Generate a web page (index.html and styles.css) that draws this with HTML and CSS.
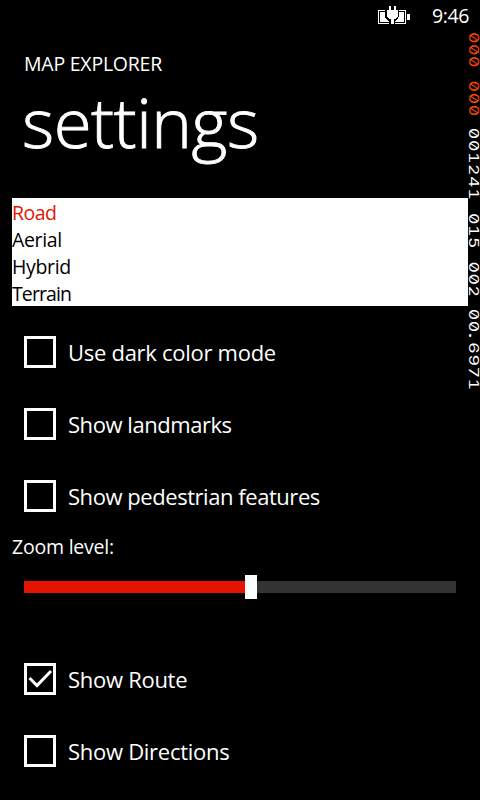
FILE: index.html
```
<!DOCTYPE html>
<html lang="en">
<head>
<meta charset="utf-8">
<title>Map Explorer settings</title>
<link rel="stylesheet" href="styles.css">
</head>
<body>
<div class="phone">
  <header class="status">
    <svg class="battery" width="32" height="20" viewBox="0 0 32 20" shape-rendering="crispEdges">
      <path d="M0 4h28v14H0z" fill="#fff"/>
      <path d="M1 5h26v12H1z" fill="#000"/>
      <path d="M2 6h24v10H2zM29 8h3v6h-3z" fill="#fff"/>
      <path d="M7 4h14v6l-1 3-3 2v3h-6v-3l-3-2-1-3z" fill="#000"/>
      <path d="M11 0h2v4h3V0h2v4h2v6l-2 3h-2v5h-3v-5h-2l-2-3V4h2z" fill="#fff"/>
    </svg>
    <span class="clock">9:46</span>
  </header>
  <div class="app-name"><span>MAP EXPLORER</span></div>
  <h1 class="title"><span>settings</span></h1>
  <main class="content">
    <ul class="modes">
      <li class="selected">Road</li>
      <li>Aerial</li>
      <li>Hybrid</li>
      <li class="tight">Terrain</li>
    </ul>
    <div class="checks">
      <div class="check"><span class="box"></span><span class="label wide">Use dark color mode</span></div>
      <div class="check"><span class="box"></span><span class="label">Show landmarks</span></div>
      <div class="check"><span class="box"></span><span class="label">Show pedestrian features</span></div>
    </div>
    <div class="zoom-label">Zoom level:</div>
    <div class="slider"><span class="fill"></span><span class="thumb"></span><span class="rest"></span></div>
    <div class="checks route">
      <div class="check"><span class="box"><svg width="26" height="26" viewBox="0 0 26 26"><path d="M2.500 12l7.500 7.500L24 5" fill="none" stroke="#fff" stroke-width="3"/></svg></span><span class="label wide">Show Route</span></div>
      <div class="check"><span class="box"></span><span class="label wide">Show Directions</span></div>
    </div>
  </main>
  <aside class="counters">
    <span class="hot">000</span>
    <span class="hot">000</span>
    <span>001241</span>
    <span>015</span>
    <span>002</span>
    <span>00<b class="point">.</b>6971</span>
  </aside>
</div>
</body>
</html>
```
FILE: styles.css
```
* { box-sizing: border-box; }
body { margin: 0; background: #000; color: #fff; font-family: "Open Sans", "Noto Sans", sans-serif; }
.phone { position: relative; width: 480px; height: 800px; overflow: hidden; background: #000; }
.status { height: 32px; display: flex; justify-content: flex-end; padding: 6px 10px 0 0; }
.battery { margin-right: 22px; }
.clock { width: 38px; font-size: 19.5px; line-height: 19px; letter-spacing: -0.35px; white-space: nowrap; }
.app-name { height: 40px; padding: 18px 0 0 24px; font-size: 19.5px; line-height: 28px; letter-spacing: -0.23px; }
.title { margin: 0; height: 126px; padding: 1px 0 0 22px; font-size: 69px; line-height: 96px; font-weight: 300; letter-spacing: -0.5px; -webkit-text-stroke: 0.9px #fff; }
.content { padding: 0 12px; }
.modes { list-style: none; margin: 0; padding: 0; height: 108px; background: #fff; color: #000; font-size: 19.5px; line-height: 27px; letter-spacing: -0.35px; }
.modes li { height: 27px; padding-top: 1px; }
.modes .selected { color: #e51400; letter-spacing: -0.5px; }
.modes .tight { letter-spacing: -0.9px; }
.checks { padding: 10px 12px 0; }
.check { height: 72px; display: flex; align-items: center; gap: 12px; }
.box { width: 32px; height: 32px; border: 3px solid #fff; }
.box svg { display: block; }
.label { font-size: 22px; line-height: 30px; letter-spacing: -0.45px; }
.label.wide { letter-spacing: -0.28px; }
.zoom-label { height: 43px; padding-top: 1px; font-size: 19.5px; line-height: 28px; letter-spacing: -0.22px; }
.slider { display: flex; align-items: center; height: 24px; margin: 0 12px; }
.fill { width: 221px; height: 12px; background: #e51400; }
.thumb { width: 12px; height: 24px; background: #fff; }
.rest { flex: 1; height: 12px; background: #333; }
.route { padding-top: 44px; }
.counters { position: absolute; right: -1px; top: 32px; width: 14px; display: flex; gap: 8.9px; transform: scaleY(1.35); transform-origin: 0 0; writing-mode: vertical-rl; font-family: Inter, sans-serif; font-weight: 400; font-size: 13.2px; line-height: 14px; letter-spacing: 0.38px; font-feature-settings: "tnum", "zero"; }
.hot { color: #ff4500; }
.point { display: inline-block; height: 7px; letter-spacing: 0; }
```
